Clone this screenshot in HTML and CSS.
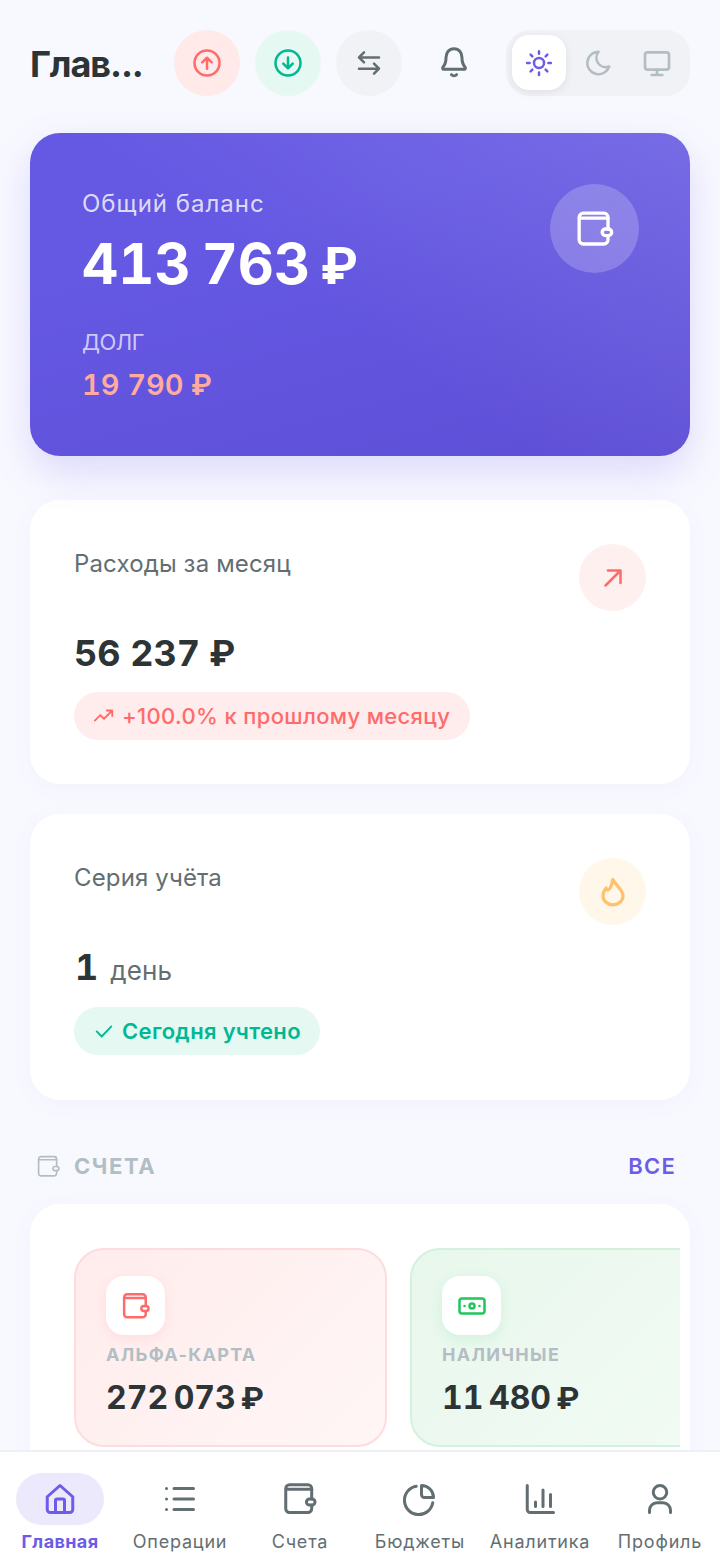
FILE: index.html
```html
<!DOCTYPE html>
<html lang="ru">
<head>
<meta charset="utf-8">
<title>Главная</title>
<link rel="stylesheet" href="styles.css">
</head>
<body>
<div class="app">
<main class="main">
  <header class="topbar">
    <h1 class="title">Глав...</h1>
    <button class="round round-red"><svg width="30" height="30" viewBox="0 0 24 24" class="ic"><circle cx="12" cy="12" r="10"/><path d="M12 16.500V8M8.200 11.500 12 7.800l3.800 3.700"/></svg></button>
    <button class="round round-green"><svg width="30" height="30" viewBox="0 0 24 24" class="ic"><circle cx="12" cy="12" r="10"/><path d="M12 7.500V16M8.200 12.500 12 16.200l3.800-3.700"/></svg></button>
    <button class="round round-grey"><svg width="30" height="30" viewBox="0 0 24 24" class="ic"><path d="M20 7.500H4M8 3.500l-4 4 4 4M4 16.500h16M16 12.500l4 4-4 4"/></svg></button>
    <button class="bell"><svg width="36" height="36" viewBox="0 0 24 24" class="ic"><path d="M12 2.500c-3.300 0-5.300 2.600-5.300 5.700 0 3.300-.6 5-2.100 6.600-.5.6-.1 1.400.6 1.400h13.600c.7 0 1.100-.8.6-1.400-1.500-1.600-2.100-3.300-2.100-6.600 0-3.100-2-5.700-5.300-5.700Z"/><path d="M10.300 19.800c.9.900 2.500.9 3.400 0"/></svg></button>
    <div class="theme">
      <span class="theme-btn active"><svg width="30" height="30" viewBox="0 0 24 24" class="ic"><circle cx="12" cy="12" r="4"/><path d="M12 2.500v2M12 19.500v2M2.500 12h2M19.500 12h2M5.300 5.300l1.400 1.400M17.300 17.300l1.400 1.400M5.300 18.700l1.400-1.400M17.300 6.700l1.400-1.400"/></svg></span>
      <span class="theme-btn"><svg width="30" height="30" viewBox="0 0 24 24" class="ic"><path d="M12.500 3a9 9 0 1 0 8.500 11.800A7.500 7.500 0 0 1 12.500 3Z"/></svg></span>
      <span class="theme-btn"><svg width="32" height="32" viewBox="0 0 24 24" class="ic"><rect x="3" y="4" width="18" height="13" rx="2"/><path d="M12 17v4M8 21h8"/></svg></span>
    </div>
  </header>

  <section class="balance">
    <div>
      <div class="balance-label">Общий баланс</div>
      <div class="balance-sum">413 763 <span class="rub">₽</span></div>
      <div class="debt-label">ДОЛГ</div>
      <div class="debt-sum">19 790 <span class="rub">₽</span></div>
    </div>
    <div class="balance-icon"><svg width="40" height="40" viewBox="0 0 24 24" class="ic"><path d="M19.800 12V5a2.500 2.500 0 0 0-2.500-2.500H5A2.500 2.500 0 0 0 2.500 5v13.500A2.500 2.500 0 0 0 5 21h12.300a2.500 2.500 0 0 0 2.500-2.500V16"/><path d="M3 5.500h16.800"/><rect x="16.300" y="12" width="5.700" height="4" rx="2"/></svg></div>
  </section>

  <section class="card">
    <div class="card-head">
      <div class="card-label">Расходы за месяц</div>
      <div class="card-icon icon-red"><svg width="30" height="30" viewBox="0 0 24 24" class="ic"><path d="M6 18 18 6M8 6h10v10"/></svg></div>
    </div>
    <div class="card-value">56 237 <span class="rub">₽</span></div>
    <div class="pill pill-red"><svg width="22" height="22" viewBox="0 0 24 24" class="ic"><path d="M2 17l6-6 4 4 9-9M15 6h6v6"/></svg>+100.0% к прошлому месяцу</div>
  </section>

  <section class="card card-streak">
    <div class="card-head">
      <div class="card-label">Серия учёта</div>
      <div class="card-icon icon-amber"><svg width="30" height="30" viewBox="0 0 24 24" class="ic flame"><path d="M11.800 2c-.3 2.500-1 4.500-1.800 6.300-.5 1-1 1.900-2.200 2.200-.7-.5-1.100-1.200-1.300-1.700C5 10.500 4 12.500 4 15.200a8 7 0 0 0 16 0C20 9.500 14 7 11.800 2Z"/></svg></div>
    </div>
    <div class="card-value streak-value">1<span class="unit">день</span></div>
    <div class="pill pill-green"><svg width="22" height="22" viewBox="0 0 24 24" class="ic"><path d="M4 12.500l5.500 5.500L20 7"/></svg>Сегодня учтено</div>
  </section>

  <div class="section-head">
    <div class="section-title"><svg viewBox="0 0 24 24" class="ic"><path d="M19.800 12V5a2.500 2.500 0 0 0-2.500-2.500H5A2.500 2.500 0 0 0 2.500 5v13.500A2.500 2.500 0 0 0 5 21h12.300a2.500 2.500 0 0 0 2.500-2.500V16"/><path d="M3 5.500h16.800"/><rect x="16.300" y="12" width="5.700" height="4" rx="2"/></svg>СЧЕТА</div>
    <div class="section-link">ВСЕ</div>
  </div>

  <section class="accounts">
    <div class="acc-row">
      <div class="acc acc-red">
        <div class="acc-icon"><svg width="30" height="30" viewBox="0 0 24 24" class="ic"><path d="M19.800 12V5a2.500 2.500 0 0 0-2.500-2.500H5A2.500 2.500 0 0 0 2.500 5v13.500A2.500 2.500 0 0 0 5 21h12.300a2.500 2.500 0 0 0 2.500-2.500V16"/><path d="M3 5.500h16.800"/><rect x="16.300" y="12" width="5.700" height="4" rx="2"/></svg></div>
        <div class="acc-name">АЛЬФА-КАРТА</div>
        <div class="acc-sum">272 073 <span class="rub">₽</span></div>
      </div>
      <div class="acc acc-green">
        <div class="acc-icon"><svg width="30" height="30" viewBox="0 0 24 24" class="ic"><rect x="2" y="6" width="20" height="12" rx="2"/><circle cx="12" cy="12" r="2"/><path d="M6 12h.01M18 12h.01"/></svg></div>
        <div class="acc-name acc-name-grey">НАЛИЧНЫЕ</div>
        <div class="acc-sum">11 480 <span class="rub">₽</span></div>
      </div>
    </div>
  </section>
</main>

<nav class="nav">
  <div class="tab tab-active">
    <span class="tab-icon"><svg width="36" height="36" viewBox="0 0 24 24" class="ic"><path d="M3.500 10.500 12 3l8.500 7.500V19a2 2 0 0 1-2 2h-13a2 2 0 0 1-2-2Z"/><path d="M9 21v-8a1 1 0 0 1 1-1h4a1 1 0 0 1 1 1v8"/></svg></span>
    <span class="tab-label">Главная</span>
  </div>
  <div class="tab">
    <span class="tab-icon"><svg width="36" height="36" viewBox="0 0 24 24" class="ic"><path d="M8 5h13M8 12h13M8 19h13M3 5h.01M3 12h.01M3 19h.01"/></svg></span>
    <span class="tab-label">Операции</span>
  </div>
  <div class="tab">
    <span class="tab-icon"><svg width="36" height="36" viewBox="0 0 24 24" class="ic"><path d="M19.800 12V5a2.500 2.500 0 0 0-2.500-2.500H5A2.500 2.500 0 0 0 2.500 5v13.500A2.500 2.500 0 0 0 5 21h12.300a2.500 2.500 0 0 0 2.500-2.500V16"/><path d="M3 5.500h16.800"/><rect x="16.300" y="12" width="5.700" height="4" rx="2"/></svg></span>
    <span class="tab-label">Счета</span>
  </div>
  <div class="tab">
    <span class="tab-icon"><svg width="36" height="36" viewBox="0 0 24 24" class="ic"><path d="M20.500 14.500A9.500 9.500 0 1 1 9.500 3.500"/><path d="M13 3a8 8 0 0 1 8 8h-6a2 2 0 0 1-2-2Z"/></svg></span>
    <span class="tab-label">Бюджеты</span>
  </div>
  <div class="tab">
    <span class="tab-icon"><svg width="36" height="36" viewBox="0 0 24 24" class="ic"><path d="M3.500 3v16a2 2 0 0 0 2 2H21M9 14v3M14 6v11M19 9v8"/></svg></span>
    <span class="tab-label">Аналитика</span>
  </div>
  <div class="tab">
    <span class="tab-icon"><svg width="36" height="36" viewBox="0 0 24 24" class="ic"><circle cx="12" cy="7.500" r="4.500"/><path d="M5 21v-1.500A5 5 0 0 1 10 14.500h4a5 5 0 0 1 5 5V21"/></svg></span>
    <span class="tab-label">Профиль</span>
  </div>
</nav>
</div>
</body>
</html>
```

FILE: styles.css
```css
* { box-sizing: border-box; }
html, body { margin: 0; padding: 0; }
body { font-family: Inter, "Noto Sans", sans-serif; background: #f8f9ff; color: #2d3436; font-optical-sizing: none; }
.app { width: 720px; height: 1558px; display: flex; flex-direction: column; overflow: hidden; }
.main { flex: 1; min-height: 0; overflow: hidden; padding: 30px 30px 0; }
.ic { fill: none; stroke: currentColor; stroke-width: 2; stroke-linecap: round; stroke-linejoin: round; display: block; }
.rub { font-family: Roboto, Inter, sans-serif; }
.flame { stroke-width: 2.600; }

.topbar { display: flex; align-items: center; height: 66px; }
.title { margin: 0; width: 144px; font-size: 36px; line-height: 44px; font-weight: 700; letter-spacing: -1.1px; white-space: nowrap; padding-top: 2px; }
button { border: 0; padding: 0; background: none; font: inherit; }
.round { width: 66px; height: 66px; border-radius: 50%; display: flex; align-items: center; justify-content: center; margin-right: 15px; flex: none; }
.round-red { background: #ffe9e9; color: #ff6b6b; }
.round-green { background: #e6f8f2; color: #00b894; }
.round-grey { background: #f1f2f6; color: #636e72; margin-right: 0; }
.bell { width: 104px; display: flex; justify-content: center; color: #636e72; flex: none; }
.theme { width: 184px; height: 66px; border-radius: 24px; background: #f1f2f6; padding: 5px 0 5px 6px; display: flex; flex: none; }
.theme-btn { width: 54px; height: 55px; margin-right: 5px; border-radius: 17px; display: flex; align-items: center; justify-content: center; color: #b2bec3; flex: none; }
.theme-btn.active { background: #fff; color: #6c5ce7; box-shadow: 0 2px 8px rgba(0,0,0,.08); }

.balance { margin-top: 37px; height: 323px; border-radius: 30px; padding: 52px 51px 52px 52px; display: flex; justify-content: space-between; color: #fff;
  background: linear-gradient(165deg, #6558e3 0%, #6558e3 30%, #5e4fd6 100%); position: relative; box-shadow: 0 16px 40px rgba(108,92,231,.2); overflow: hidden; }
.balance::before { content: ""; position: absolute; inset: 0; background: linear-gradient(215deg, rgba(255,255,255,.12) 0%, rgba(255,255,255,0) 55%); }
.balance > * { position: relative; }
.balance-label { font-size: 24px; line-height: 36px; color: rgba(255,255,255,.8); letter-spacing: 1px; padding-top: 1px; }
.balance-sum { font-size: 56px; line-height: 68px; font-weight: 700; margin-top: 8px; font-variant-numeric: tabular-nums; word-spacing: -4px; }
.balance-sum .rub { font-size: 52px; }
.debt-label { font-size: 22px; line-height: 30px; margin-top: 26px; color: rgba(255,255,255,.7); letter-spacing: -.5px; }
.debt-sum { font-size: 29px; line-height: 40px; font-weight: 600; margin-top: 8px; color: #ffab9f; font-variant-numeric: tabular-nums; }
.balance-icon { width: 89px; height: 89px; border-radius: 50%; background: rgba(255,255,255,.2); display: flex; align-items: center; justify-content: center; margin-top: -1px; }

.card { background: #fff; border-radius: 30px; margin-top: 44px; height: 284px; padding: 44px; box-shadow: 0 4px 20px rgba(108,92,231,.05); }
.card-streak { margin-top: 30px; height: 286px; }
.card-head { display: flex; justify-content: space-between; align-items: flex-start; height: 67px; }
.card-label { font-size: 24px; line-height: 40px; color: #636e72; letter-spacing: .15px; }
.card-icon { width: 67px; height: 67px; border-radius: 50%; display: flex; align-items: center; justify-content: center; }
.icon-red { background: #fff0f0; color: #ff6b6b; }
.icon-amber { background: #fff7ea; color: #fec26f; }
.card-value { font-size: 36px; line-height: 46px; font-weight: 700; margin-top: 19px; font-variant-numeric: tabular-nums; }
.streak-value { margin-top: 19px; padding-left: 1px; }
.unit { font-size: 26px; font-weight: 400; color: #636e72; margin-left: 12px; letter-spacing: .1px; }
.pill { display: inline-flex; align-items: center; height: 48px; border-radius: 24px; padding: 0 20px 0 19px; font-size: 22px; font-weight: 500; margin-top: 15px; gap: 7px; letter-spacing: .35px; }
.pill-red { background: #ffecec; color: #ff6b6b; }
.pill-green { background: #e6f8f2; color: #00b894; font-weight: 600; gap: 7px; margin-top: 13px; padding-right: 19px; }

.section-head { display: flex; justify-content: space-between; align-items: center; margin-top: 50px; padding: 0 14px 0 6px; height: 32px; }
.section-title { display: flex; align-items: center; gap: 13px; font-size: 22px; font-weight: 700; letter-spacing: 1.6px; color: #b2bec3; }
.section-title .ic { width: 25px; height: 25px; stroke-width: 1.600; }
.section-link { font-size: 22px; font-weight: 600; letter-spacing: 1.2px; color: #6c5ce7; }

.accounts { background: #fff; border-radius: 30px; margin-top: 22px; padding: 44px 10px 44px 44px; box-shadow: 0 4px 20px rgba(108,92,231,.05); height: 300px; }
.acc-row { display: flex; gap: 23px; overflow: hidden; }
.acc { flex: none; width: 313px; height: 199px; border-radius: 30px; padding: 26px 30px; }
.acc-red { background: linear-gradient(135deg, #ffecec, #fff6f6); border: 2px solid #ffdcdc; }
.acc-green { background: linear-gradient(135deg, #e8f7ec, #f2fbf5); border: 2px solid #d3f2dc; }
.acc-icon { width: 59px; height: 59px; border-radius: 18px; background: #fff; display: flex; align-items: center; justify-content: center; margin-bottom: 7px; }
.acc-red .acc-icon { color: #ff6b6b; box-shadow: 0 4px 14px rgba(255,107,107,.12); }
.acc-green .acc-icon { color: #22c55e; box-shadow: 0 4px 14px rgba(34,197,94,.12); }
.acc-name { font-size: 18px; line-height: 26px; font-weight: 700; letter-spacing: 1.3px; color: #b2bec3; }
.acc-name-grey { color: #b5bdc4; }
.acc-sum { font-size: 32px; line-height: 40px; font-weight: 700; margin-top: 10px; font-variant-numeric: tabular-nums; word-spacing: -3px; }

.nav { flex: none; height: 108px; background: #fff; border-top: 2px solid #eef0f6; display: flex; padding: 21px 0 0; position: relative; }
.tab { flex: 1; display: flex; flex-direction: column; align-items: center; color: #636e72; }
.tab-icon { width: 88px; height: 52px; border-radius: 26px; display: flex; align-items: center; justify-content: center; }
.tab-label { font-size: 18px; line-height: 24px; margin-top: 5px; letter-spacing: .8px; white-space: nowrap; }
.tab-active { color: #6c5ce7; }
.tab-active .tab-icon { background: #ece9fc; }
.tab-active .tab-label { font-weight: 700; letter-spacing: .4px; }
```
